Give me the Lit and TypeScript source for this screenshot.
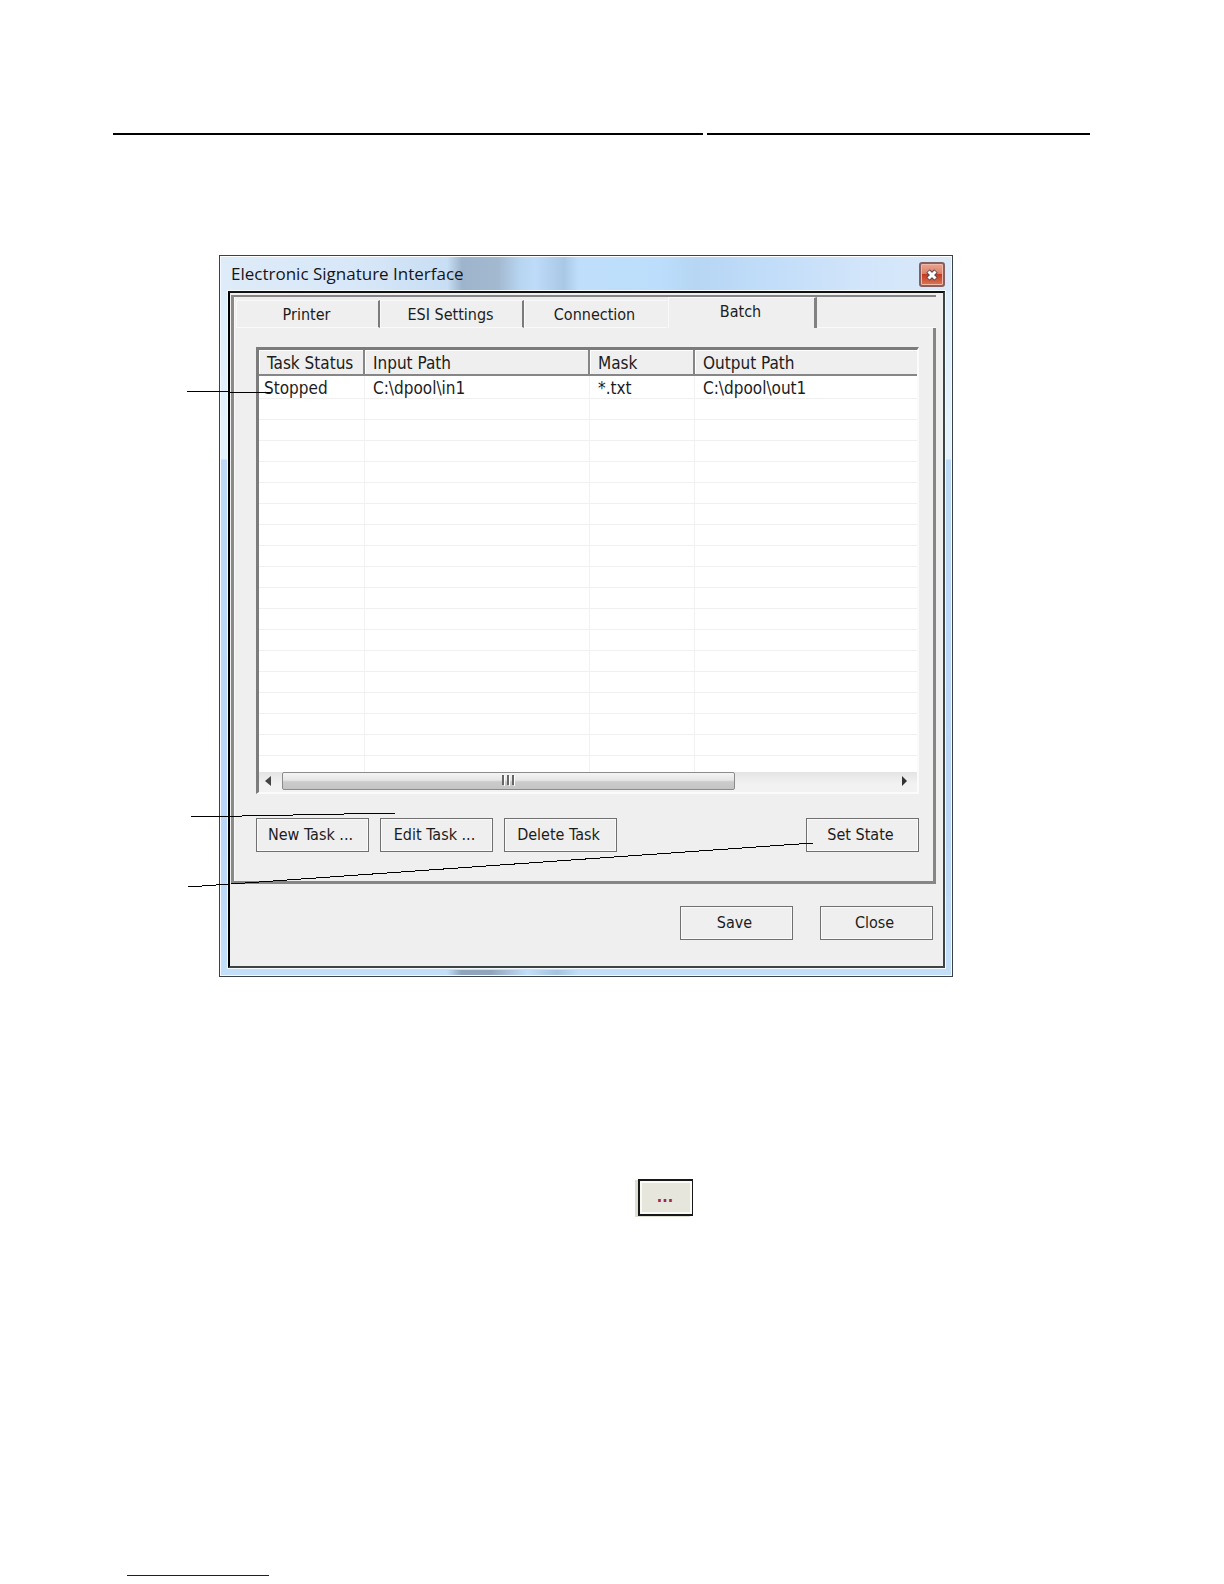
import { LitElement, html, css, svg } from "lit";
import { customElement, state } from "lit/decorators.js";

interface Task {
  status: string;
  input: string;
  mask: string;
  output: string;
}

const TABS = ["Printer", "ESI Settings", "Connection", "Batch"];
const TASKS: Task[] = [
  { status: "Stopped", input: "C:\\dpool\\in1", mask: "*.txt", output: "C:\\dpool\\out1" },
];
const EMPTY_ROWS = 17;

@customElement("task-list")
export class TaskList extends LitElement {
  static styles = css`
    :host {
      display: block;
      border: solid;
      border-width: 3px 2px 2px 3px;
      border-color: #7c7c7c #fbfbfb #fbfbfb #7c7c7c;
      background: #fff;
      color: #1c1c1c;
    }
    table {
      width: 100%;
      table-layout: fixed;
      border-collapse: separate;
      border-spacing: 0;
      font-size: 17px;
      line-height: 20px;
    }
    .c1 { width: 106px; }
    .c2 { width: 225px; }
    .c3 { width: 105px; }
    th {
      box-sizing: border-box;
      height: 26px;
      padding: 2px 0 0 8px;
      text-align: left;
      font-weight: normal;
      white-space: nowrap;
      background: #efefef;
      border-right: 2px solid #868686;
      border-bottom: 2px solid #868686;
      box-shadow: inset 1px 1px 0 #fff;
    }
    th:last-child { border-right: 0; }
    td {
      box-sizing: border-box;
      height: 21px;
      padding: 0 0 0 8px;
      border-right: 1px solid #f2f2f2;
      border-bottom: 1px solid #f0f0f0;
      white-space: nowrap;
    }
    td:first-child { padding-left: 5px; }
    td:last-child { border-right: 0; }
    tr.filled td { height: 23px; padding-top: 3px; line-height: 19px; }
    tr.tail td { height: 16px; border-bottom: 0; }
    .scroll {
      display: flex;
      align-items: flex-start;
      height: 20px;
      background: linear-gradient(#e4e4e4, #f2f2f2 60%);
    }
    .arrow {
      width: 23px;
      height: 17px;
      padding: 0 0 0 5px;
      border: 0;
      background: none;
      display: flex;
      align-items: center;
    }
    .right { padding-left: 7px; }
    .track { flex: 1; display: flex; }
    .thumb {
      box-sizing: border-box;
      width: 74%;
      height: 18px;
      border: 1px solid #8b8b8b;
      border-radius: 2px;
      background: linear-gradient(#f4f4f4, #e6e6e6 45%, #cbcbcb 55%, #c4c4c4);
      display: flex;
      align-items: center;
      justify-content: center;
    }
  `;

  render() {
    return html`
      <table>
        <colgroup><col class="c1" /><col class="c2" /><col class="c3" /><col /></colgroup>
        <thead>
          <tr><th>Task Status</th><th>Input Path</th><th>Mask</th><th>Output Path</th></tr>
        </thead>
        <tbody>
          ${TASKS.map(
            (t) => html`<tr class="filled">
              <td>${t.status}</td><td>${t.input}</td><td>${t.mask}</td><td>${t.output}</td>
            </tr>`
          )}
          ${Array.from({ length: EMPTY_ROWS }, () => html`<tr><td></td><td></td><td></td><td></td></tr>`)}
          <tr class="tail"><td></td><td></td><td></td><td></td></tr>
        </tbody>
      </table>
      <div class="scroll">
        <button class="arrow" aria-label="Scroll left">
          <svg width="8" height="12" viewBox="0 0 8 12"><path d="M7 1v10L1 6z" fill="#444" /></svg>
        </button>
        <div class="track">
          <div class="thumb">
            <svg width="13" height="12" viewBox="0 0 13 12">
              <path d="M1 0v10M6 0v10M11 0v10" stroke="#666" stroke-width="2" />
              <path d="M2.500 1v10M7.500 1v10M12.500 1v10" stroke="#fff" stroke-width="1" />
            </svg>
          </div>
        </div>
        <button class="arrow right" aria-label="Scroll right">
          <svg width="8" height="12" viewBox="0 0 8 12"><path d="M1 1v10l5-5z" fill="#333" /></svg>
        </button>
      </div>
    `;
  }
}

@customElement("app-root")
export class AppRoot extends LitElement {
  @state() private active = "Batch";

  static styles = css`
    :host {
      display: block;
      padding: 133px 134px 8px 113px;
      background: #fff;
      font: 16px/20px "DejaVu Sans Condensed", "DejaVu Sans", sans-serif;
      color: #1c1c1c;
    }
    button { font: inherit; color: inherit; }
    .rules { display: grid; grid-template-columns: 590fr 383fr; gap: 4px; }
    .rules span { height: 2px; background: #000; }
    .dialog {
      position: relative;
      margin: 120px 137px 0 106px;
      border: 1px solid #3a4148;
      box-shadow: inset 0 0 0 1px #f4faff;
      padding: 0 7px 8px 8px;
      background:
        linear-gradient(90deg, transparent 31%, #8fa5ba 33%, #8fa5ba 37%, transparent 42%, #a5c3de 46%, transparent 49%) 0 100% / 100% 6px no-repeat,
        linear-gradient(#dcecfb, #e4f2fd 203px, #bdd9f7 204px, #bad5f7 80%, #c3dff8);
    }
    .glass {
      display: flex;
      justify-content: space-between;
      align-items: flex-start;
      height: 35px;
      margin: 0 -6px 0 -7px;
      padding: 0 6px 0 10px;
      background: linear-gradient(90deg, #deebf8 0, #d8e8f8 18%, #c8def4 31%, #9db4cc 33%, #a3b9d0 38%, #b7d5f1 41%, #bedcf9 43%, #a9c8e5 47%, #bfdefb 49%, #bcdefc 60%, #b6d6f3 65%, #c0dcf9 74%, #d2e5fa 88%, #d9e9f9);
      box-shadow: inset 0 1px 0 #fff;
    }
    h1 {
      margin: 0;
      padding-top: 6px;
      font: 17px/24px "Open Sans", "Noto Sans", sans-serif;
      color: #151515;
    }
    .x {
      display: flex;
      align-items: center;
      justify-content: center;
      width: 26px;
      height: 25px;
      margin-top: 6px;
      padding: 0;
      border: 2px solid #85605f;
      border-radius: 3px;
      background: linear-gradient(#e9a493, #dd8068 45%, #c23b20 50%, #dc7658);
      box-shadow: inset 0 0 0 1px #efb9a9;
    }
    .client {
      border: 2px solid #3c4444;
      border-left-color: #000;
      border-top-color: #111;
      outline: 1px solid #f4faff;
      padding: 2px 7px 26px 1px;
      background: #efefef;
    }
    .tabs {
      border-left: 3px solid #8a8a88;
      border-top: 2px solid #858383;
      box-shadow: inset 1px 0 0 #fafafa;
    }
    .strip { display: flex; align-items: flex-end; height: 31px; padding-left: 2px; }
    .tab {
      box-sizing: border-box;
      width: 144px;
      height: 28px;
      padding: 1px 2px 0 0;
      border: solid;
      border-width: 1px 2px 1px 1px;
      border-color: #f9f9f9 #7b7b7b #fafafa #f9f9f9;
      background: #efefef;
    }
    .tab:nth-child(3) { border-right-color: #efefef; }
    .tab.on {
      width: 149px;
      height: 31px;
      padding-bottom: 3px;
      border-right-width: 3px;
      border-bottom: 0;
      border-right-color: #828282;
    }
    .rest { flex: 1; height: 1px; background: #fafafa; }
    .panel {
      padding: 19px 14px 29px 22px;
      border: solid #868686;
      border-width: 0 3px 3px 0;
    }
    .actions { display: flex; gap: 11px; margin-top: 24px; }
    .btn {
      box-sizing: border-box;
      width: 113px;
      height: 34px;
      padding: 0 4px 1px 0;
      border: 1px solid #707070;
      box-shadow: inset 0 0 0 1px #fafafa;
      background: #efefef;
      white-space: nowrap;
    }
    .end { margin-left: auto; }
    .footer { display: flex; justify-content: flex-end; gap: 27px; padding: 22px 3px 0 0; }
    .callouts {
      position: absolute;
      left: 0;
      top: 0;
      width: 100%;
      height: 100%;
      overflow: visible;
      pointer-events: none;
    }
    .inline { display: flex; margin: 202px 0 0 525px; }
    .browse {
      box-sizing: border-box;
      width: 55px;
      height: 37px;
      padding: 0 2px 2px 0;
      border: solid #181818;
      border-width: 2px 1px 2px 2px;
      box-shadow: inset 0 0 0 2px #fbfbf6, -3px 1px 0 #dedfd3;
      background: #e6e6dc;
      color: #a02848;
      font-weight: bold;
    }
    .link { width: 142px; height: 1px; margin: 359px 0 0 14px; background: #14147c; }
  `;

  private line(x1: string, y1: number, x2: string, y2: number) {
    return svg`<line x1=${x1} y1=${y1} x2=${x2} y2=${y2} stroke="#000" shape-rendering="crispEdges" />`;
  }

  render() {
    return html`
      <div class="rules"><span></span><span></span></div>
      <section class="dialog">
        <header class="glass">
          <h1>Electronic Signature Interface</h1>
          <button class="x" aria-label="Close window">
            <svg width="14" height="14" viewBox="0 0 14 14">
              <path d="M3 3l8 8M11 3l-8 8" stroke="#5b4648" stroke-width="5" />
              <path d="M3.500 3.500l7 7M10.500 3.500l-7 7" stroke="#fff" stroke-width="3" />
            </svg>
          </button>
        </header>
        <div class="client">
          <div class="tabs">
            <div class="strip" role="tablist">
              ${TABS.map(
                (t) => html`<button
                  role="tab"
                  class="tab ${t === this.active ? "on" : ""}"
                  aria-selected=${t === this.active}
                  @click=${() => (this.active = t)}
                >${t}</button>`
              )}
              <span class="rest"></span>
            </div>
            <div class="panel" role="tabpanel">
              <task-list></task-list>
              <div class="actions">
                <button class="btn">New Task ...</button>
                <button class="btn">Edit Task ...</button>
                <button class="btn">Delete Task</button>
                <button class="btn end">Set State</button>
              </div>
            </div>
          </div>
          <div class="footer">
            <button class="btn">Save</button>
            <button class="btn">Close</button>
          </div>
        </div>
        <svg class="callouts" aria-hidden="true">
          ${this.line("-34", 135, "7%", 137)}
          ${this.line("-29", 561, "24%", 557)}
          ${this.line("-32", 631, "81%", 587)}
        </svg>
      </section>
      <div class="inline"><button class="browse" aria-label="Browse">...</button></div>
      <div class="link"></div>
    `;
  }
}
